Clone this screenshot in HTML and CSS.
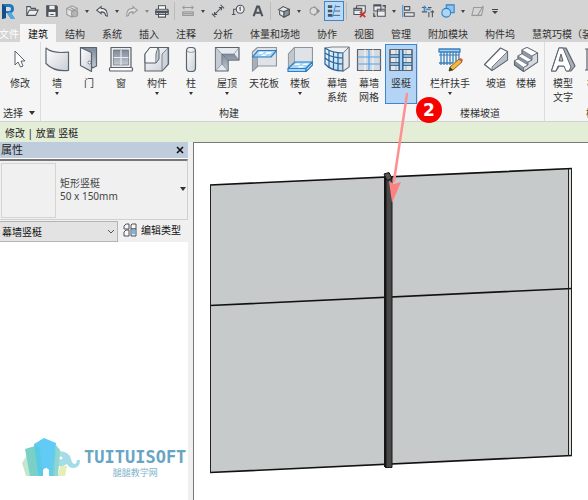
FILE: index.html
```html
<!DOCTYPE html>
<html lang="zh-CN">
<head>
<meta charset="utf-8">
<title>Revit</title>
<link rel="stylesheet" href="styles.css">
</head>
<body>
<svg class="defs" width="0" height="0" aria-hidden="true">
  <defs>
    <linearGradient id="steel" x1="0" y1="0" x2="1" y2="1"><stop offset="0" stop-color="#fff"/><stop offset="1" stop-color="#c9cfd6"/></linearGradient>
    <linearGradient id="shade" x1="0" y1="0" x2="0" y2="1"><stop offset="0" stop-color="#7f8b9b"/><stop offset="1" stop-color="#c3cad3"/></linearGradient>
    <linearGradient id="glass" x1="0" y1="0" x2="1" y2="1"><stop offset="0" stop-color="#eaf6ff"/><stop offset="1" stop-color="#b5daf7"/></linearGradient>
  </defs>
</svg>

<header class="quickbar">
  <button class="logo" aria-label="Revit"><svg width="16" height="20" viewBox="0 0 16 20"><path d="M2 3h7q5 0 5 5 0 3-3 4l4 6h-4l-4-6H6v5l-4 1z" fill="#2378b8"/><path d="M2 3l4 3v11l-4 1z" fill="#174e86"/><path d="M6 6h3q2 0 2 2t-2 2H6z" fill="#d4dfe9"/><path d="M7 12l4-1 4 7h-4z" fill="#52a7dc"/></svg></button>
  <button class="tool" aria-label="打开"><svg viewBox="0 0 16 16"><path d="M2 13V3h4l1 2h5v2M2 13l3-6h10l-3 6z" fill="#eee"/></svg></button>
  <button class="tool" aria-label="保存"><svg viewBox="0 0 16 16"><path d="M2 2h11l1 1v11H2z" fill="#4d535b"/><path d="M5 2h6v4H5zM4 9h8v5H4z" fill="#eee" stroke="none"/><path d="M6 12h4"/></svg></button>
  <button class="tool dim" aria-label="同步"><svg viewBox="0 0 16 16"><path d="M2 5l6-3 6 3v7l-6 3-6-3zM2 5l6 3 6-3M8 8v7M5 3.500l6 3" fill="#e2e2e2"/><circle cx="11" cy="11" r="3.500" fill="#b5b5b5"/></svg></button>
  <button class="drop" aria-label="同步选项"></button>
  <button class="tool" aria-label="放弃"><svg viewBox="0 0 16 16"><path d="M2 7l5-4v2q7 0 7 7v2l-2-1q0-4-5-4v2z" fill="#eee"/></svg></button>
  <button class="drop" aria-label="放弃列表"></button>
  <button class="tool dim" aria-label="重做"><svg viewBox="0 0 16 16"><path d="M14 7L9 3v2q-7 0-7 7v2l2-1q0-4 5-4v2z" fill="#ddd"/></svg></button>
  <button class="drop faded" aria-label="重做列表"></button>
  <button class="tool" aria-label="打印"><svg viewBox="0 0 16 16"><path d="M4 6V2h8v4M2 6h12q1 0 1 1v5H1V7q0-1 1-1zM4 10h8v5H4z" fill="#fff"/><path d="M1 8h14v2H1z" fill="#4d535b"/></svg></button>
  <span class="rule"></span>
  <button class="tool dim" aria-label="测量"><svg viewBox="0 0 16 16"><path d="M2 4h12M4 2L2 4l2 2M12 2l2 2-2 2M2 9h12v4H2z" fill="none"/><path d="M2 11h12"/></svg></button>
  <button class="drop" aria-label="测量选项"></button>
  <button class="tool" aria-label="对齐尺寸标注"><svg viewBox="0 0 16 16"><path d="M3 13L13 3M1 11l4 4M11 1l4 4M4 9v3h3M9 4h3v3" fill="none"/></svg></button>
  <button class="tool" aria-label="标记"><svg viewBox="0 0 16 16"><circle cx="10.500" cy="6" r="4.500" fill="#eee"/><path d="M9.500 5l1-1v4M6 6H3v6M1 12h4" fill="none"/></svg></button>
  <button class="tool" aria-label="文字"><svg viewBox="0 0 16 16"><path d="M3 14L7 3h2l4 11M5 10h6" fill="none" stroke-width="2.400"/></svg></button>
  <span class="rule"></span>
  <button class="tool" aria-label="三维视图"><svg viewBox="0 0 16 16"><path d="M1 7l6-4 7 3v6l-6 3-5-3V7M3 7l5 2 6-3M8 9v6" fill="#e8e8e8"/><path d="M8 9l6-3v6l-6 3z" fill="#8d949d"/></svg></button>
  <button class="drop" aria-label="三维视图选项"></button>
  <button class="tool dim" aria-label="剖面"><svg viewBox="0 0 16 16"><path d="M8 2l7 6-7 6z" fill="#888" stroke="none"/><circle cx="7.500" cy="8" r="4" fill="#ddd"/></svg></button>
  <button class="tool on" aria-label="细线"><svg viewBox="0 0 16 16"><path d="M1 3h5M1 8h5M1 13h5" stroke-width="3"/><path d="M9 3h6M8 8h7M6 13h9" stroke-width="1"/><path d="M10 1L6 15" stroke="#3f9bea"/></svg></button>
  <span class="rule"></span>
  <button class="tool" aria-label="关闭隐藏窗口"><svg viewBox="0 0 16 16"><path d="M4 2h10v7M4 2v3M1 5h9v7H1zM1 7h9" fill="#ececec"/><path d="M8 9l6 6M14 9l-6 6" stroke="#d22f2f" stroke-width="2"/></svg></button>
  <button class="tool" aria-label="切换窗口"><svg viewBox="0 0 16 16"><path d="M1 1h8v7H1zM5 6h9v8H5zM5 8h9" fill="#ececec"/><path d="M1 2h8M11 2h3v3M3 14H1v-4" stroke-width="1.500" fill="none"/></svg></button>
  <button class="drop narrow" aria-label="窗口列表"></button>
  <button class="tool" aria-label="对齐"><svg viewBox="0 0 16 16"><path d="M4 3h6v4H4zM4 10h11v4H4z" fill="#e6e6e6"/><path d="M2 1v14" stroke="#3f8fd2"/></svg></button>
  <button class="tool" aria-label="修剪"><svg viewBox="0 0 16 16"><path d="M1 4h5M8 4h4M1 9h6M9 9v6M13 7v8M11 9h4" fill="none"/><path d="M4 2v6M6 6h5" stroke="#3f8fd2" stroke-width="2"/></svg></button>
  <button class="tool blue" aria-label="连接"><svg viewBox="0 0 16 16"><path d="M6 5V1h9v9h-4" fill="#8ec4f0"/><circle cx="6" cy="10" r="5" fill="#acd6f6"/></svg></button>
  <button class="drop" aria-label="连接选项"></button>
  <button class="tool dim" aria-label="编辑"><svg viewBox="0 0 16 16"><path d="M3 4h11l-2 9H1zM14 2l-7 12" fill="none"/></svg></button>
  <button class="drop more" aria-label="自定义快速访问工具栏"></button>
</header>

<nav class="tabs">
  <a class="file" href="#file">文件</a>
  <a class="current" href="#arch">建筑</a>
  <a href="#struct">结构</a>
  <a href="#sys">系统</a>
  <a href="#insert">插入</a>
  <a href="#note">注释</a>
  <a href="#analyze">分析</a>
  <a href="#mass">体量和场地</a>
  <a href="#collab">协作</a>
  <a href="#view">视图</a>
  <a href="#manage">管理</a>
  <a href="#addins">附加模块</a>
  <a href="#gjw">构件坞</a>
  <a href="#hz">慧筑巧模（装</a>
</nav>

<div class="ribbon">
  <section class="panel select">
    <div class="row">
      <button class="cmd w40"><svg viewBox="0 0 26 26"><path d="M8 5v14l3-3 2.500 5 2.500-1-2-5h4z" fill="#fff" stroke-width="1"/></svg>修改</button>
    </div>
    <h2>选择 <i class="caret big"></i></h2>
  </section>

  <section class="panel">
    <div class="row">
      <button class="cmd w32"><svg viewBox="0 0 26 26"><path d="M2 2Q9 8 24.500 6V24.500Q10 26 2 17.500Z" fill="url(#steel)"/></svg>墙<i class="caret"></i></button>
      <button class="cmd w32"><svg viewBox="0 0 26 26"><path d="M4.500 1.500h16V20l-4 2z" fill="url(#shade)"/><path d="M4.500 1.500l11 5v19l-11-6z" fill="url(#steel)"/><circle cx="13.500" cy="16.500" r="1.500" fill="#fff" stroke-width=".8"/></svg>门</button>
      <button class="cmd w32"><svg viewBox="0 0 26 26"><path d="M3 1.500h20v20H3z" fill="#e8ebee"/><path d="M5.500 4h15v15h-15z" fill="url(#shade)" stroke-width=".6"/><path d="M13 4v15M5.500 11.500h15" stroke="#e6eaee" stroke-width="1.200"/><rect x="1.500" y="21.500" width="23" height="3.500" rx="1" fill="#fff"/></svg>窗</button>
      <button class="cmd w40"><svg viewBox="0 0 26 26"><path d="M1 8l5-6.500h18.500V18l-6.500 7H1z" fill="url(#steel)"/><path d="M18 8l6-6v16l-6 7z" fill="#cdd3da" stroke-width=".7"/><path d="M1 8l5-6.500h8L12 8v9H1z" fill="#f4f6f8" stroke-width="1"/><path d="M12 17l3-4V4l-1-2.500" fill="#c2c9d1" stroke-width="1"/></svg>构件<i class="caret"></i></button>
      <button class="cmd w28"><svg viewBox="0 0 26 26"><rect x="8.500" y="1.500" width="9" height="24" rx="3.500" fill="url(#steel)"/><path d="M9 5q4 3 8 0" fill="none" stroke="#a4abb4"/></svg>柱<i class="caret"></i></button>
      <button class="cmd w44"><svg viewBox="0 0 26 26"><path d="M1.500 1.500H25V14H14v11H1.500z" fill="#e6e9ed"/><path d="M1.500 1.500L8 8v10l-6.500 7z" fill="#c6ccd3" stroke-width=".5"/><path d="M8 8h12l5 6H14v11l-6-7z" fill="url(#shade)" stroke-width=".5"/><path d="M8 8l6 6M20 8l5-6.500" stroke-width=".5"/></svg>屋顶<i class="caret"></i></button>
      <button class="cmd w30"><svg viewBox="0 0 26 26"><path d="M1.500 6l5-4.500H25.500V20H7l-5.500 5z" fill="#dfe2e6" stroke="#8d949d"/><path d="M1.500 11l5-4v13l-5 5z" fill="#a9afb7" stroke="#8d949d" stroke-width=".8"/><path d="M1.500 11L7 4.500h18.500L20 11z" fill="#a5d5fb" stroke="#2d7fc1"/><path d="M9 6h4l-2 2H7zM16 6h5l-2 2h-5zM12 8.500h4L14 10h-4z" fill="#fff" stroke="none"/></svg>天花板</button>
      <button class="cmd w42"><svg viewBox="0 0 26 26"><path d="M1.500 8l6-6.500h18V17l-6 6h-18z" fill="#dfe2e6" stroke="#8d949d"/><path d="M1.500 8l6-6.500V17l-6 5z" fill="#c2c7ce" stroke="#8d949d" stroke-width=".8"/><path d="M1 22.500L8 16h17.500L19 22.500V25.500H1z" fill="#a5d5fb" stroke="#2d7fc1"/><path d="M1 22.500h18V25.500l6.500-6.500V16l-6.500 6.500" fill="#d8edfd" stroke="#2d7fc1"/><path d="M9 17.500h5L12 19H7zM17 17.500h5L20 19h-5zM12 20h5l-1.500 1.500h-5z" fill="#fff" stroke="none"/></svg>楼板<i class="caret"></i></button>
      <button class="cmd w32"><svg viewBox="0 0 26 26"><path d="M1 2l7-1h17v20l-6 4z" fill="#eef0f2" stroke="#7b838d"/><path d="M1 2q7 5 18 5v18Q7 25 1 18z" fill="url(#glass)" stroke="#2b6395"/><path d="M5 4.500v17M9.500 6v18M14 7v18M1 7q7 5 18 5M1 12q7 6 18 6" fill="none" stroke="#2b6395" stroke-width="1.200"/><path d="M19 7l6-6v20l-6 4z" fill="#e4e8ec" stroke-width=".8"/></svg><span>幕墙<br>系统</span></button>
      <button class="cmd w32"><svg viewBox="0 0 26 26"><path d="M1.500 3.500h23v21h-23z" fill="#d6dade"/><path d="M9 3.500v21M17 3.500v21" stroke="#f2f4f6"/><path d="M13 3.500v21M1.500 11h23M1.500 18h23" stroke="#4fa3ee" stroke-width="1.200"/></svg><span>幕墙<br>网格</span></button>
      <div class="callout-anchor">
        <button class="cmd w32 active"><svg viewBox="0 0 26 26"><path d="M2 3.500h22v21H2z" fill="#e4e8ec"/><path d="M8 3.500v21M18 3.500v21" stroke="#a9b4bf" stroke-width="1"/><path d="M2 10h22M2 18h22" stroke="#1d4d77" stroke-width="3.500"/><path d="M2 10h22M2 18h22" stroke="#b4dcfc" stroke-width="1.500"/><path d="M13 3v22" stroke="#1d4d77" stroke-width="5"/><path d="M13 4v20" stroke="#9fd0fa" stroke-width="2.500"/><path d="M2 3.500h22v21H2z" fill="none" stroke-width="1"/></svg>竖梃</button>
        <svg class="arrow" width="30" height="116" viewBox="0 0 30 116"><path d="M22 7L9 94" stroke="#ff9090" stroke-width="2.500" fill="none" stroke-linecap="round"/><path d="M4 94l5 3 7-2-9 21z" fill="#ff8080"/></svg>
        <span class="badge">2</span>
      </div>
    </div>
    <h2>构建</h2>
  </section>

  <section class="panel stairs">
    <div class="row">
      <button class="cmd w64"><svg viewBox="0 0 26 26"><path d="M2 3h21v3H2zM2 17h14M4 6v13M7 6v13M10 6v13M13 6v13M16 6v11M19 6v10M22 6v8" fill="#9fd0fa" stroke="#3b7fb9" stroke-width="1.300"/><path d="M2 9h20" stroke="#3b7fb9" stroke-width="1"/><path d="M12 25l1-4 9-8 3 3-9 8z" fill="#f6b73c" stroke="#6b4a16" stroke-width=".8"/><path d="M12 25l1-4 3 3z" fill="#333" stroke="none"/><path d="M22 13l2-1 2 2-1 2z" fill="#e05c4b" stroke="none"/></svg>栏杆扶手<i class="caret"></i></button>
      <button class="cmd w28"><svg viewBox="0 0 26 26"><path d="M1.500 18.500L17.500 2 24.500 5.500V14L9 24.500z" fill="#fff"/><path d="M9 24.500V21L24.500 5.500V14z" fill="#b9c0c9" stroke-width=".8"/></svg>坡道</button>
      <button class="cmd w32"><svg viewBox="0 0 26 26"><path d="M14 1.500L9 4v4l-4 2v3l-3.500 2v4l9 6.500 14-9.500V7z" fill="#8f99a5"/><path d="M14 1.500L9 4l10 6 5.500-3zM9 8l-4 2 10 6 4-2zM5 13l-3.500 2 9 6.500L15 19z" fill="#fff" stroke-width=".6"/><path d="M10.500 25.500v-4L15 19v-3l4-2v-4l5.500-3v9z" fill="#d5dae0" stroke-width=".8"/></svg>楼梯</button>
    </div>
    <h2>楼梯坡道</h2>
  </section>

  <section class="panel model">
    <div class="row">
      <button class="cmd w36"><svg viewBox="0 0 26 26"><path d="M9 2h7l9 18-4 5h-4l-2-5H9l-3 5H1.500z" fill="#aab1ba"/><path d="M9 2h4l8 19-2 4h-3l-2-5H8l-2 5H1.500zM11 8l-2 7h4z" fill="#fff" fill-rule="evenodd" stroke-width="1"/></svg><span>模型<br>文字</span></button>
      <button class="cmd w32"><svg viewBox="0 0 26 26"><path d="M3 3v21M9 3v21M1 3h4M1 24h4" fill="none"/></svg>模型</button>
    </div>
    <h2>模型</h2>
  </section>
</div>

<div class="options">修改 | 放置 竖梃</div>

<main class="work">
  <aside class="props">
    <header><h1>属性</h1><button class="close" aria-label="关闭"><svg width="8" height="8" viewBox="0 0 8 8"><path d="M1 1l6 6M7 1L1 7" stroke="#111" stroke-width="1.600"/></svg></button></header>
    <button class="type">
      <span class="thumb"></span>
      <span class="name">矩形竖梃<br>50 x 150mm</span>
      <i class="caret big"></i>
    </button>
    <div class="filter">
      <div class="pick">
        <select aria-label="属性过滤器"><option>幕墙竖梃</option></select>
        <svg width="8" height="6" viewBox="0 0 8 6"><path d="M1 1l3 3 3-3" fill="none" stroke="#555"/></svg>
      </div>
      <button class="edit"><svg width="14" height="14" viewBox="0 0 14 14" fill="#f8f8f8" stroke="#4d535b"><path d="M1 3l2-2h3v5H1zM1 9l2-2h3v6H1zM8 2l1-1h4v5H8z"/><path d="M8 6h5v7H8z" fill="#dcecfb"/><path d="M9 8h3M9 10h3" stroke="#2878c8"/></svg>编辑类型</button>
    </div>
    <div class="watermark">
      <svg width="60" height="40" viewBox="0 0 60 40">
        <path d="M0 25l5-8 9 5v16H4z" fill="#c3e6d0"/>
        <path d="M3 11l10-3 8 30H8z" fill="#7bd0c6"/>
        <path d="M33 13q14-1 16 8 1 5 4 5 2-1 2-4h3q0 8-7 8-4 0-6-4-4 3-10 2z" fill="#a4dce8"/>
        <path d="M38 28h7l-2 10h-7z" fill="#e3efb5"/>
        <path d="M34 7l4 5-2 26h-8z" fill="#8fd6cf"/>
        <path d="M12 6L22 0l12 5-3 33h-4v-6q-3-4-6 0v6h-5z" fill="#62cbf5"/>
        <path d="M12 6l5 32h4l-3-28z" fill="#55c9da" opacity=".7"/>
        <path d="M34 5l-7 27v6h5z" fill="#69cfdf" opacity=".6"/>
        <circle cx="39" cy="20" r="1.500" fill="#fff"/>
      </svg>
      <p><strong>TUITUISOFT</strong><span>腿腿教学网</span></p>
    </div>
  </aside>
  <section class="view" aria-label="三维视图">
    <svg viewBox="0 0 394 356" preserveAspectRatio="xMinYMin meet">
      <path d="M17 42L377 25V312.500L17 329.500z" fill="#c6caca"/>
      <path d="M374.500 26h3v286h-3z" fill="#dedfda"/>
      <path d="M16 42L378 25.500M16 162.500L378 145.500M16 329.500L378 312.500" stroke="#111" stroke-width="1.600" fill="none"/>
      <path d="M16.500 42v288M374.500 26v287M377.500 25v288" stroke="#222" fill="none"/>
      <path d="M190 33h8v291h-8z" fill="#484848"/>
      <path d="M190 33h2.500v291H190z" fill="#151515"/>
      <path d="M198 33v291.500h-7" stroke="#181818" fill="none"/>
      <path d="M190 31l5-1.500 3 6-5 2z" fill="#555" stroke="#111"/>
    </svg>
  </section>
</main>
</body>
</html>
```
FILE: styles.css
```css
* { box-sizing: border-box; }

body {
  margin: 0;
  height: 100vh;
  display: flex;
  flex-direction: column;
  overflow: hidden;
  background: #f0f0f0;
  color: #333;
  font: 10px/14px "Noto Sans", "Noto Sans CJK SC", sans-serif;
}

button, select {
  margin: 0;
  padding: 0;
  border: 0;
  background: none;
  color: inherit;
  font: inherit;
}

h1, h2, p { margin: 0; font: inherit; }
a { color: inherit; text-decoration: none; }
.defs { position: absolute; }

/* Quick access toolbar */
.quickbar {
  display: flex;
  align-items: center;
  flex: none;
  height: 24px;
  padding-bottom: 2px;
  background: #d4d4d4;
}

.logo { width: 22px; height: 20px; flex: none; text-align: left; }
.logo svg { display: block; }

.tool {
  display: grid;
  place-items: center;
  flex: none;
  width: 20px;
  height: 20px;
}

.tool svg { width: 14px; height: 14px; stroke: #4d535b; stroke-width: 1.2; }
.tool.dim svg { stroke: #999; }
.tool.blue svg { stroke: #2f7fc4; }
.tool.on { background: #b9daf8; border: 1px solid #3d85c8; }

.rule { flex: none; width: 1px; height: 18px; margin: 0 3px 0 2px; background: #bcbcbc; }

.drop { flex: none; width: 10px; height: 20px; display: grid; place-items: center; }
.drop::before {
  content: "";
  border: 2px solid transparent;
  border-top: 3px solid #444;
  border-bottom: 0;
}
.drop.narrow { width: 8px; }
.drop.faded::before { border-top-color: #888; }
.drop.more { width: 14px; align-content: center; gap: 1px; }
.drop.more::before { border-width: 3px 3px 0; }
.drop.more::after { content: ""; order: -1; width: 6px; height: 1px; background: #444; }

/* Tabs */
.tabs {
  display: flex;
  flex: none;
  gap: 1px;
  height: 18px;
  background: #d4d4d4;
  line-height: 20px;
  white-space: nowrap;
}

.tabs a { flex: none; padding: 0 8px; }
.tabs .file { width: 19px; padding: 0; color: #fff; text-indent: -1px; }
.tabs .current { background: #f5f5f5; color: #111; }

/* Ribbon */
.ribbon {
  display: flex;
  flex: none;
  background: #f5f5f5;
  border-bottom: 1px solid #d2d2d2;
}

.panel { flex: none; padding-top: 2px; border-right: 1px solid #dcdcdc; }
.panel.stairs { padding-right: 2px; }
.panel.model { width: 102px; border-right: 0; }
.row { display: flex; }
.panel h2 { height: 17px; line-height: 18px; text-align: center; }
.panel.select h2 { padding-left: 3px; text-align: left; }

.cmd {
  display: flex;
  flex-direction: column;
  align-items: center;
  flex: none;
  height: 60px;
  padding-top: 2px;
  white-space: nowrap;
  line-height: 14px;
}

.cmd svg {
  flex: none;
  width: 26px;
  height: 26px;
  margin-bottom: 4px;
  stroke: #5b636d;
  stroke-width: 1.2;
  stroke-linejoin: round;
}

.w28 { width: 28px; }
.w30 { width: 30px; }
.w32 { width: 32px; }
.w36 { width: 36px; }
.w40 { width: 40px; }
.w42 { width: 42px; }
.w44 { width: 44px; }
.w64 { width: 64px; }

.cmd.active { background: #b3d4f4; outline: 1px solid #3e86cd; outline-offset: -1px; }

.caret {
  display: block;
  width: 0;
  margin: 2px 0 0;
  border: 2px solid transparent;
  border-top: 3px solid #333;
  border-bottom: 0;
}

.caret.big {
  display: inline-block;
  margin: 0 0 2px 3px;
  border-width: 4px 3px 0;
}

/* Step marker over the selected command */
.callout-anchor { position: relative; }
.arrow { position: absolute; left: 0; top: 43px; z-index: 2; pointer-events: none; }
.badge {
  position: absolute;
  left: 31px;
  top: 53px;
  z-index: 3;
  width: 26px;
  height: 26px;
  border-radius: 50%;
  background: #f80000;
  color: #fff;
  font: bold 17px/26px "DejaVu Sans", sans-serif;
  text-align: center;
}

/* Options bar */
.options {
  flex: none;
  height: 20px;
  padding-left: 5px;
  background: #e4eed6;
  color: #222;
  line-height: 22px;
}

/* Workspace */
.work { display: flex; flex: 1; min-height: 0; }

.props {
  display: flex;
  flex-direction: column;
  flex: none;
  width: 188px;
  background: #fff;
}

.props header {
  display: flex;
  align-items: center;
  justify-content: space-between;
  height: 16px;
  padding: 0 4px 0 1px;
  background: #bfccdc;
  color: #222;
}

.props h1 { font-size: 11px; }
.close { width: 8px; height: 8px; }
.close svg { display: block; }

.type {
  display: flex;
  align-items: center;
  height: 61px;
  padding: 0 1px;
  border: 1px solid #d0d0d0;
  border-top: 2px solid #777;
  border-left: 0;
  margin-top: 1px;
  background: #f0f0f0;
  color: #444;
  text-align: left;
  line-height: 13px;
}

.thumb { width: 55px; height: 55px; border: 1px solid #d4d4d4; margin-right: 4px; }
.name { flex: 1; }

.filter { display: flex; height: 22px; padding-top: 1px; background: #f0f0f0; }
.pick { position: relative; width: 118px; }
.pick select {
  width: 100%;
  height: 21px;
  padding-left: 2px;
  appearance: none;
  border: 1px solid #b4b4b4;
  border-left: 0;
  background: #e3e3e3;
  color: #111;
}
.pick svg { position: absolute; right: 3px; top: 8px; pointer-events: none; }
.edit { display: flex; align-items: center; height: 18px; gap: 4px; margin-left: 5px; color: #111; }

.watermark { display: flex; gap: 2px; margin: auto 0 21px 22px; }
.watermark p { display: flex; flex-direction: column; align-items: center; padding-top: 9px; }
.watermark strong { color: #68a5c3; font: bold 17px/20px "DejaVu Sans Mono", monospace; }
.watermark span { color: #7fb2cc; font-size: 9px; line-height: 12px; }

.view {
  flex: 1;
  min-width: 0;
  margin-left: 5px;
  border-top: 1px solid #777;
  border-left: 1px solid #777;
  background: #fff;
}

.view svg { display: block; width: 100%; }
```
